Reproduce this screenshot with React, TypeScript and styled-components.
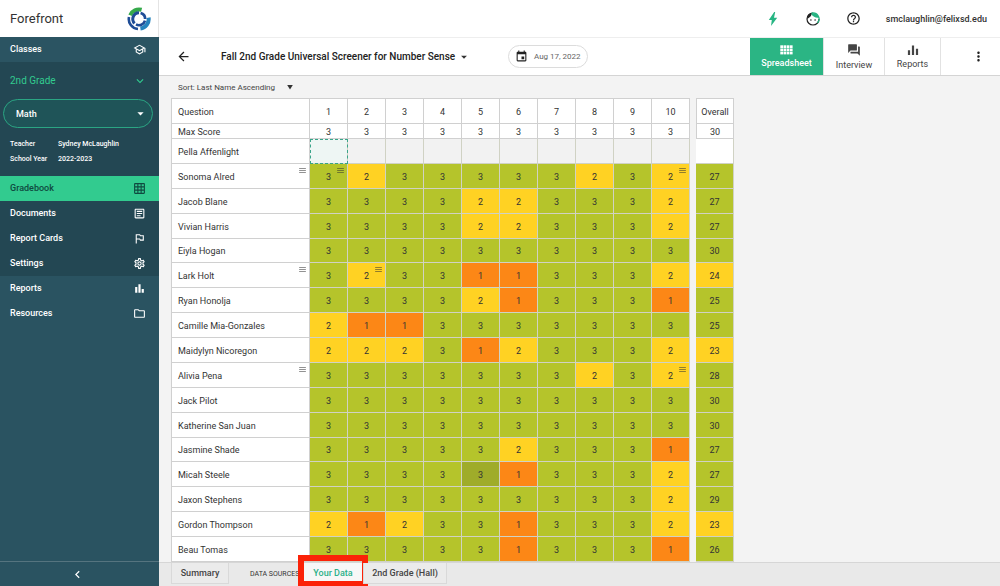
import React from 'react';
import styled, { createGlobalStyle } from 'styled-components';
import type { IconType } from 'react-icons';
import {
  MdArrowBack,
  MdArrowDropDown,
  MdBarChart,
  MdChevronLeft,
  MdEvent,
  MdForum,
  MdGridOn,
  MdHelpOutline,
  MdKeyboardArrowDown,
  MdMenu,
  MdMoreVert,
  MdOutlineArticle,
  MdOutlineFolder,
  MdOutlineSchool,
  MdOutlineSettings,
  MdOutlinedFlag,
} from 'react-icons/md';

const GlobalStyle = createGlobalStyle`
  * { box-sizing: border-box; }
  body { margin: 0; background: #f3f3f3; }
  body, button, select { font-family: Roboto, "Liberation Sans", sans-serif; }
  button, select { margin: 0; padding: 0; border: 0; background: none; color: inherit; cursor: pointer; }
  a { color: inherit; text-decoration: none; }
  svg { display: block; flex: none; }
`;

const Page = styled.div`
  display: flex;
  height: 100vh;
  color: #333;
  font-size: 9px;
`;

const Sidebar = styled.aside`
  display: flex;
  flex-direction: column;
  flex: none;
  width: 159px;
  background: #2a5361;
  color: #fff;
`;

const Brand = styled.div`
  display: flex;
  align-items: center;
  justify-content: space-between;
  flex: none;
  height: 37px;
  padding: 0 7px 0 10px;
  border-right: 1px solid #e4e4e4;
  background: #fff;
  color: #333;
  font-size: 13px;
`;

const NavItem = styled.a<{ $tone?: 'dark' | 'active' | 'head' }>`
  display: flex;
  align-items: center;
  justify-content: space-between;
  flex: none;
  height: 25px;
  padding: 0 13px 1px 10px;
  font-weight: 500;
  background: ${(p) =>
    p.$tone === 'active' ? '#32cb8f' : p.$tone === 'dark' ? '#234753' : p.$tone === 'head' ? '#2b5462' : 'transparent'};
  color: ${(p) => (p.$tone === 'active' ? '#0f4a40' : '#fff')};
`;

const ClassPanel = styled.section`
  display: flex;
  flex-direction: column;
  flex: none;
  height: 114px;
  background: #234753;
`;

const GradeButton = styled.button`
  display: flex;
  align-items: center;
  justify-content: space-between;
  height: 37px;
  padding: 0 12px 0 10px;
  color: #32cb8f;
  font-size: 10px;
`;

const SubjectField = styled.label`
  display: grid;
  align-items: center;
  height: 29px;
  margin: 0 6px 0 3px;
  border: 1px solid #2ba583;
  border-radius: 15px;
  background: #1f5458;

  select, svg { grid-area: 1 / 1; }
  select { appearance: none; height: 27px; padding-left: 12px; color: #fff; font-size: 9px; font-weight: 500; outline: 0; }
  svg { justify-self: end; margin-right: 4px; pointer-events: none; }
`;

const Facts = styled.dl`
  display: grid;
  grid-template-columns: 48px 1fr;
  margin: 9px 0 0 10px;
  font-size: 7px;
  font-weight: 500;
  line-height: 15px;

  dt, dd { margin: 0; }
`;

const Collapse = styled.button`
  display: grid;
  place-items: center;
  height: 25px;
  margin-top: auto;
  padding-right: 4px;
  border-top: 1px solid #55747f;
  color: #fff;
`;

const Main = styled.main`
  display: flex;
  flex-direction: column;
  flex: 1;
  min-width: 0;
`;

const TopBar = styled.header`
  display: flex;
  align-items: center;
  justify-content: flex-end;
  flex: none;
  gap: 25px;
  height: 37px;
  padding-right: 13px;
  background: #fff;

  a { font-weight: 500; }
`;

const IconButton = styled.button`
  display: grid;
  place-items: center;
  width: 15px;
  height: 20px;
  color: #222;
`;

const ToolBar = styled.div`
  display: flex;
  align-items: center;
  flex: none;
  height: 39px;
  padding-left: 17px;
  border-top: 1px solid #eee;
  border-bottom: 1px solid #d4d4d4;
  background: #fff;
`;

const Picker = styled.label<{ $title?: boolean }>`
  display: flex;
  align-items: center;
  gap: ${(p) => (p.$title ? 1 : 10)}px;
  margin-left: ${(p) => (p.$title ? 30 : 0)}px;

  select {
    appearance: none;
    outline: 0;
    color: ${(p) => (p.$title ? '#222' : '#444')};
    font-size: ${(p) => (p.$title ? 10 : 8)}px;
    font-weight: ${(p) => (p.$title ? 500 : 400)};
  }
`;

const DateButton = styled.button`
  display: flex;
  align-items: center;
  gap: 6px;
  height: 23px;
  margin-left: 37px;
  padding: 0 6px;
  border: 1px solid #dcdcdc;
  border-radius: 12px;
  color: #666;
  font-size: 8px;

  svg { color: #222; }
`;

const Views = styled.nav`
  display: flex;
  align-self: stretch;
  margin-left: auto;
`;

const View = styled.button<{ $active?: boolean; $width: number }>`
  display: flex;
  flex-direction: column;
  align-items: center;
  justify-content: center;
  gap: 3px;
  width: ${(p) => p.$width}px;
  border-right: 1px solid #e2e2e2;
  background: ${(p) => (p.$active ? '#2bb584' : '#fff')};
  color: ${(p) => (p.$active ? '#fff' : '#444')};
  font-size: 9px;
  font-weight: ${(p) => (p.$active ? 500 : 400)};
`;

const More = styled.button`
  display: grid;
  place-items: center;
  width: 59px;
  padding-left: 15px;
  color: #222;
`;

const SortRow = styled.div`
  display: flex;
  align-items: center;
  flex: none;
  height: 22px;
  padding-left: 19px;
`;

const SheetArea = styled.div`
  display: grid;
  justify-content: start;
  flex: 1;
  min-height: 0;
  padding-left: 12px;
  overflow: auto;
`;

const Sheet = styled.table`
  height: 100%;
  border-spacing: 0;
  table-layout: fixed;
  width: 563px;
  font-size: 9px;
  line-height: 10px;
  text-align: center;

  th, td { padding: 2px 0 0; font-weight: 400; }
`;

const tones = { 1: '#fc8716', 2: '#ffd223', 3: '#b5c42b' } as const;

const HeadCell = styled.th<{ $top?: boolean }>`
  height: ${(p) => (p.$top ? 26 : 15)}px;
  border: 0 solid #d0d0d0;
  border-width: ${(p) => (p.$top ? 1 : 0)}px 1px 1px 0;
  background: #fff;

  &:first-child, &:last-child { border-left-width: 1px; }
  &&:first-child { padding-left: 6px; text-align: left; }
`;

const NameCell = styled.th`
  position: relative;
  border: 1px solid #d0d0d0;
  border-top: 0;
  background: #fff;
  text-align: left;

  && { padding-left: 6px; }
`;

const ScoreCell = styled.td<{ $fill: string; $focus?: boolean }>`
  position: relative;
  border: 0 solid #d0d2c4;
  border-width: 0 1px 1px 0;
  background: ${(p) => p.$fill};
  ${(p) => p.$focus && 'outline: 1px dashed #3aa58a; outline-offset: -1px;'}
`;

const Gap = styled.td`
  width: 6px;
`;

const NoteMark = styled.span`
  position: absolute;
  top: 2px;
  right: 2px;
  opacity: 0.7;
`;

const BottomBar = styled.footer`
  display: flex;
  flex: none;
  height: 24px;
  padding: 0 12px;
  border-top: 1px solid #d6d6d6;
  background: #e9e9e9;
`;

const SheetTab = styled.button<{ $width: number; $marked?: boolean }>`
  position: relative;
  width: ${(p) => p.$width}px;
  height: 21px;
  border: 1px solid #d9d9d9;
  border-top: 0;
  background: ${(p) => (p.$marked ? '#f7f7f7' : '#ebebeb')};
  color: ${(p) => (p.$marked ? '#2bb088' : '#444')};
  font-size: 9px;
  font-weight: 500;
`;

const Highlight = styled.span`
  position: absolute;
  inset: -8px -6px -4px;
  border: 6px solid #fb2208;
`;

const SourceLabel = styled.span`
  margin-left: 21px;
  width: 53px;
  font-size: 7px;
  line-height: 23px;
  white-space: nowrap;
`;

const Logo = () => (
  <svg width="24" height="24" viewBox="0 0 24 24" fill="none" aria-hidden="true">
    <path d="M3.2 8.2A9.6 9.6 0 0 1 14.6 2.8" stroke="#35a94a" strokeWidth="4" />
    <path d="M21.6 10.6A9.7 9.7 0 0 1 13.4 21.6" stroke="#2583bd" strokeWidth="4" />
    <path d="M2 10A10 10 0 0 0 11 22" stroke="#1e4c96" strokeWidth="2.6" />
    <path d="M7.6 16.4A6.2 6.2 0 0 1 12 5.8" stroke="#1e4c96" strokeWidth="3" />
    <path d="M13.6 6A6.2 6.2 0 0 1 18.2 12" stroke="#1e4c96" strokeWidth="2.8" />
    <path d="M18 13.6A6.2 6.2 0 0 1 9 17.4" stroke="#1e4c96" strokeWidth="2.6" />
  </svg>
);

const Bolt = () => (
  <svg width="10" height="14" viewBox="0 0 10 14" aria-hidden="true">
    <path d="M6.2 0 .8 7.9h3L3 14 9.2 5.7H6L7.2 0Z" fill="#27b583" />
  </svg>
);

const Face = () => (
  <svg width="14" height="14" viewBox="0 0 14 14" fill="none" aria-hidden="true">
    <path d="M7 1A6 6 0 1 0 13 7" stroke="#222" strokeWidth="1.2" />
    <path d="M5.5 1.2A6 6 0 0 1 11.5 11" stroke="#27b583" strokeWidth="1.3" />
    <path d="M1.2 6.8C3.3 6 5 4.6 5.6 2.6L5.5.9A6 6 0 0 0 1.2 6.8Z" fill="#222" />
    <path d="M5.5 2.5C7 4.8 9.6 6 12.8 5.6 12 2.6 9 .6 5.5 1Z" fill="#27b583" />
    <circle cx="4.9" cy="8" r=".8" fill="#222" />
    <circle cx="9.1" cy="8" r=".8" fill="#222" />
  </svg>
);

const CellsIcon = () => (
  <svg width="13" height="10" viewBox="0 0 13 10" fill="currentColor" aria-hidden="true">
    {[0, 1, 2, 3].flatMap((x) =>
      [0, 1, 2].map((y) => <rect key={`${x}${y}`} x={0.3 + x * 3.2} y={0.3 + y * 3.2} width="2.7" height="2.7" />),
    )}
  </svg>
);

const RoundBars = () => (
  <svg width="12" height="12" viewBox="0 0 12 12" stroke="currentColor" strokeWidth="2.2" aria-hidden="true">
    <path d="M2 6.3V11M6 1.5V11M10 4.8V11" />
  </svg>
);

const Caret = () => (
  <svg width="8" height="8" viewBox="0 0 8 8" aria-hidden="true">
    <path d="M1.2 2h5.6L4 6.4Z" fill="#333" />
  </svg>
);

const classLinks: [string, IconType][] = [
  ['Gradebook', MdGridOn],
  ['Documents', MdOutlineArticle],
  ['Report Cards', MdOutlinedFlag],
  ['Settings', MdOutlineSettings],
];

const siteLinks: [string, IconType][] = [
  ['Reports', MdBarChart],
  ['Resources', MdOutlineFolder],
];

interface Student {
  name: string;
  scores: string;
  notes?: number[];
  nameNote?: boolean;
  hovered?: number;
}

const students: Student[] = [
  { name: 'Pella Affenlight', scores: '' },
  { name: 'Sonoma Alred', scores: '3233333232', notes: [0, 9], nameNote: true },
  { name: 'Jacob Blane', scores: '3333223332' },
  { name: 'Vivian Harris', scores: '3333223332' },
  { name: 'Eiyla Hogan', scores: '3333333333' },
  { name: 'Lark Holt', scores: '3233113332', notes: [1], nameNote: true },
  { name: 'Ryan Honolja', scores: '3333213331' },
  { name: 'Camille Mia-Gonzales', scores: '2113333333' },
  { name: 'Maidylyn Nicoregon', scores: '2223123332' },
  { name: 'Alivia Pena', scores: '3333333232', notes: [9], nameNote: true },
  { name: 'Jack Pilot', scores: '3333333333' },
  { name: 'Katherine San Juan', scores: '3333333333' },
  { name: 'Jasmine Shade', scores: '3333323331' },
  { name: 'Micah Steele', scores: '3333313332', hovered: 4 },
  { name: 'Jaxon Stephens', scores: '3333333332' },
  { name: 'Gordon Thompson', scores: '2123313332' },
  { name: 'Beau Tomas', scores: '3333313331' },
];

const questions = [1, 2, 3, 4, 5, 6, 7, 8, 9, 10];

const Note = () => (
  <NoteMark>
    <MdMenu size={9} />
  </NoteMark>
);

const StudentRow = ({ student }: { student: Student }) => {
  const values = student.scores.split('').map(Number) as (1 | 2 | 3)[];
  const total = values.reduce<number>((a, b) => a + b, 0);
  return (
    <tr>
      <NameCell scope="row">
        {student.name}
        {student.nameNote && <Note />}
      </NameCell>
      {questions.map((q, i) => (
        <ScoreCell
          key={q}
          $fill={!values.length ? (i ? '#f2f2f2' : '#eef6f4') : student.hovered === i ? '#9fac2a' : tones[values[i]]}
          $focus={!values.length && i === 0}
        >
          {values[i]}
          {student.notes?.includes(i) && <Note />}
        </ScoreCell>
      ))}
      <Gap />
      <ScoreCell $fill={!total ? '#fff' : total < 25 ? tones[2] : tones[3]}>{total || ''}</ScoreCell>
    </tr>
  );
};

export default function App() {
  return (
    <Page>
      <GlobalStyle />
      <Sidebar>
        <Brand>
          Forefront
          <Logo />
        </Brand>
        <NavItem href="#classes" $tone="head">
          Classes <MdOutlineSchool size={13} />
        </NavItem>
        <ClassPanel>
          <GradeButton>
            2nd Grade <MdKeyboardArrowDown size={14} />
          </GradeButton>
          <SubjectField>
            <select aria-label="Subject">
              <option>Math</option>
            </select>
            <MdArrowDropDown size={15} />
          </SubjectField>
          <Facts>
            <dt>Teacher</dt>
            <dd>Sydney McLaughlin</dd>
            <dt>School Year</dt>
            <dd>2022-2023</dd>
          </Facts>
        </ClassPanel>
        {classLinks.map(([label, Icon], i) => (
          <NavItem key={label} href="#class" $tone={i ? 'dark' : 'active'}>
            {label} <Icon size={13} />
          </NavItem>
        ))}
        {siteLinks.map(([label, Icon]) => (
          <NavItem key={label} href="#site">
            {label} <Icon size={13} />
          </NavItem>
        ))}
        <Collapse aria-label="Collapse menu">
          <MdChevronLeft size={15} />
        </Collapse>
      </Sidebar>
      <Main>
        <TopBar>
          <IconButton aria-label="Activity"><Bolt /></IconButton>
          <IconButton aria-label="Profile"><Face /></IconButton>
          <IconButton aria-label="Help"><MdHelpOutline size={15} /></IconButton>
          <a href="#account">smclaughlin@felixsd.edu</a>
        </TopBar>
        <ToolBar>
          <IconButton aria-label="Back"><MdArrowBack size={15} /></IconButton>
          <Picker $title>
            <select aria-label="Assessment">
              <option>Fall 2nd Grade Universal Screener for Number Sense</option>
            </select>
            <MdArrowDropDown size={14} />
          </Picker>
          <DateButton>
            <MdEvent size={13} /> Aug 17, 2022
          </DateButton>
          <Views>
            <View $active $width={74}><CellsIcon />Spreadsheet</View>
            <View $width={61}><MdForum size={14} />Interview</View>
            <View $width={56}><RoundBars />Reports</View>
            <More aria-label="More"><MdMoreVert size={15} /></More>
          </Views>
        </ToolBar>
        <SortRow>
          <Picker>
            <select aria-label="Sort">
              <option>Sort: Last Name Ascending</option>
            </select>
            <Caret />
          </Picker>
        </SortRow>
        <SheetArea>
          <Sheet>
            <colgroup>
              <col style={{ width: 139 }} />
              {questions.map((q) => <col key={q} style={{ width: 38 }} />)}
              <col style={{ width: 6 }} />
              <col style={{ width: 38 }} />
            </colgroup>
            <thead>
              <tr>
                <HeadCell $top scope="col">Question</HeadCell>
                {questions.map((q) => <HeadCell $top key={q} scope="col">{q}</HeadCell>)}
                <Gap />
                <HeadCell $top scope="col">Overall</HeadCell>
              </tr>
              <tr>
                <HeadCell scope="row">Max Score</HeadCell>
                {questions.map((q) => <HeadCell key={q}>3</HeadCell>)}
                <Gap />
                <HeadCell>30</HeadCell>
              </tr>
            </thead>
            <tbody>
              {students.map((s) => <StudentRow key={s.name} student={s} />)}
            </tbody>
          </Sheet>
        </SheetArea>
        <BottomBar>
          <SheetTab $width={58}>Summary</SheetTab>
          <SourceLabel>DATA SOURCES:</SourceLabel>
          <SheetTab $width={60} $marked>
            Your Data
            <Highlight />
          </SheetTab>
          <SheetTab $width={84}>2nd Grade (Hall)</SheetTab>
        </BottomBar>
      </Main>
    </Page>
  );
}
